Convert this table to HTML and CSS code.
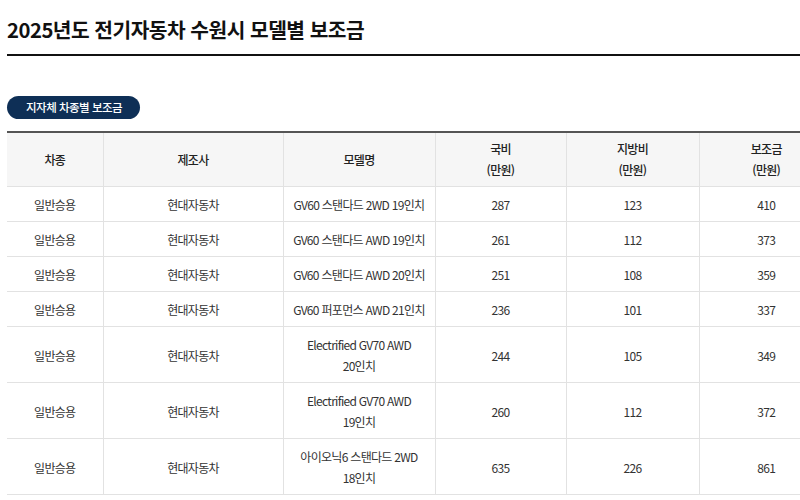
FILE: index.html
```html
<!DOCTYPE html>
<html lang="ko">
<head>
<meta charset="utf-8">
<link rel="stylesheet" href="styles.css">
</head>
<body>
<div class="page">
  <h1 class="title">2025년도 전기자동차 수원시 모델별 보조금</h1>
  <div class="tab">지자체 차종별 보조금</div>
  <table class="grid">
    <colgroup>
      <col class="c1"><col class="c2"><col class="c3"><col class="c4"><col class="c5"><col class="c6">
    </colgroup>
    <thead>
      <tr><th>차종</th><th>제조사</th><th>모델명</th><th>국비<br>(만원)</th><th>지방비<br>(만원)</th><th>보조금<br>(만원)</th></tr>
    </thead>
    <tbody>
      <tr><td>일반승용</td><td>현대자동차</td><td>GV60 스탠다드 2WD 19인치</td><td>287</td><td>123</td><td>410</td></tr>
      <tr><td>일반승용</td><td>현대자동차</td><td>GV60 스탠다드 AWD 19인치</td><td>261</td><td>112</td><td>373</td></tr>
      <tr><td>일반승용</td><td>현대자동차</td><td>GV60 스탠다드 AWD 20인치</td><td>251</td><td>108</td><td>359</td></tr>
      <tr><td>일반승용</td><td>현대자동차</td><td>GV60 퍼포먼스 AWD 21인치</td><td>236</td><td>101</td><td>337</td></tr>
      <tr><td>일반승용</td><td>현대자동차</td><td>Electrified GV70 AWD<br>20인치</td><td>244</td><td>105</td><td>349</td></tr>
      <tr><td>일반승용</td><td>현대자동차</td><td>Electrified GV70 AWD<br>19인치</td><td>260</td><td>112</td><td>372</td></tr>
      <tr><td>일반승용</td><td>현대자동차</td><td>아이오닉6 스탠다드 2WD<br>18인치</td><td>635</td><td>226</td><td>861</td></tr>
    </tbody>
  </table>
</div>
</body>
</html>
```

FILE: styles.css
```css
html, body {
  margin: 0;
  padding: 0;
  background: #fff;
}
body {
  font-family: "Noto Sans CJK KR", "Noto Sans", sans-serif;
  color: #333;
}
.page {
  width: 826px;
  padding-left: 7px;
}
.title {
  margin: 0;
  padding: 15px 0 10px;
  font-size: 20.3px;
  line-height: 29px;
  font-weight: 700;
  color: #111;
  letter-spacing: -0.5px;
  border-bottom: 2px solid #111;
}
.tab {
  display: inline-block;
  margin-top: 40px;
  height: 23px;
  line-height: 23px;
  padding: 0 18px 0 19px;
  border-radius: 12px;
  background: #0e2f56;
  color: #fff;
  font-size: 11.5px;
  font-weight: 500;
  letter-spacing: -0.5px;
}
.grid {
  margin-top: 12px;
  width: 826px;
  table-layout: fixed;
  border-collapse: collapse;
  border-top: 2px solid #555;
  font-size: 12px;
  letter-spacing: -0.7px;
}
.c1 { width: 96px; }
.c2 { width: 180px; }
.c3 { width: 152px; }
.c4 { width: 131px; }
.c5 { width: 133px; }
.c6 { width: 134px; }
.grid th, .grid td {
  text-align: center;
  vertical-align: middle;
  line-height: 21px;
  padding: 7px 4px 6px;
  border-bottom: 1px solid #e2e2e2;
  border-left: 1px solid #e2e2e2;
  color: #333;
}
.grid th:first-child, .grid td:first-child {
  border-left: none;
}
.grid th {
  background: #f6f6f6;
  font-weight: 500;
  padding: 5px 4px 6px;
  color: #222;
}
```
